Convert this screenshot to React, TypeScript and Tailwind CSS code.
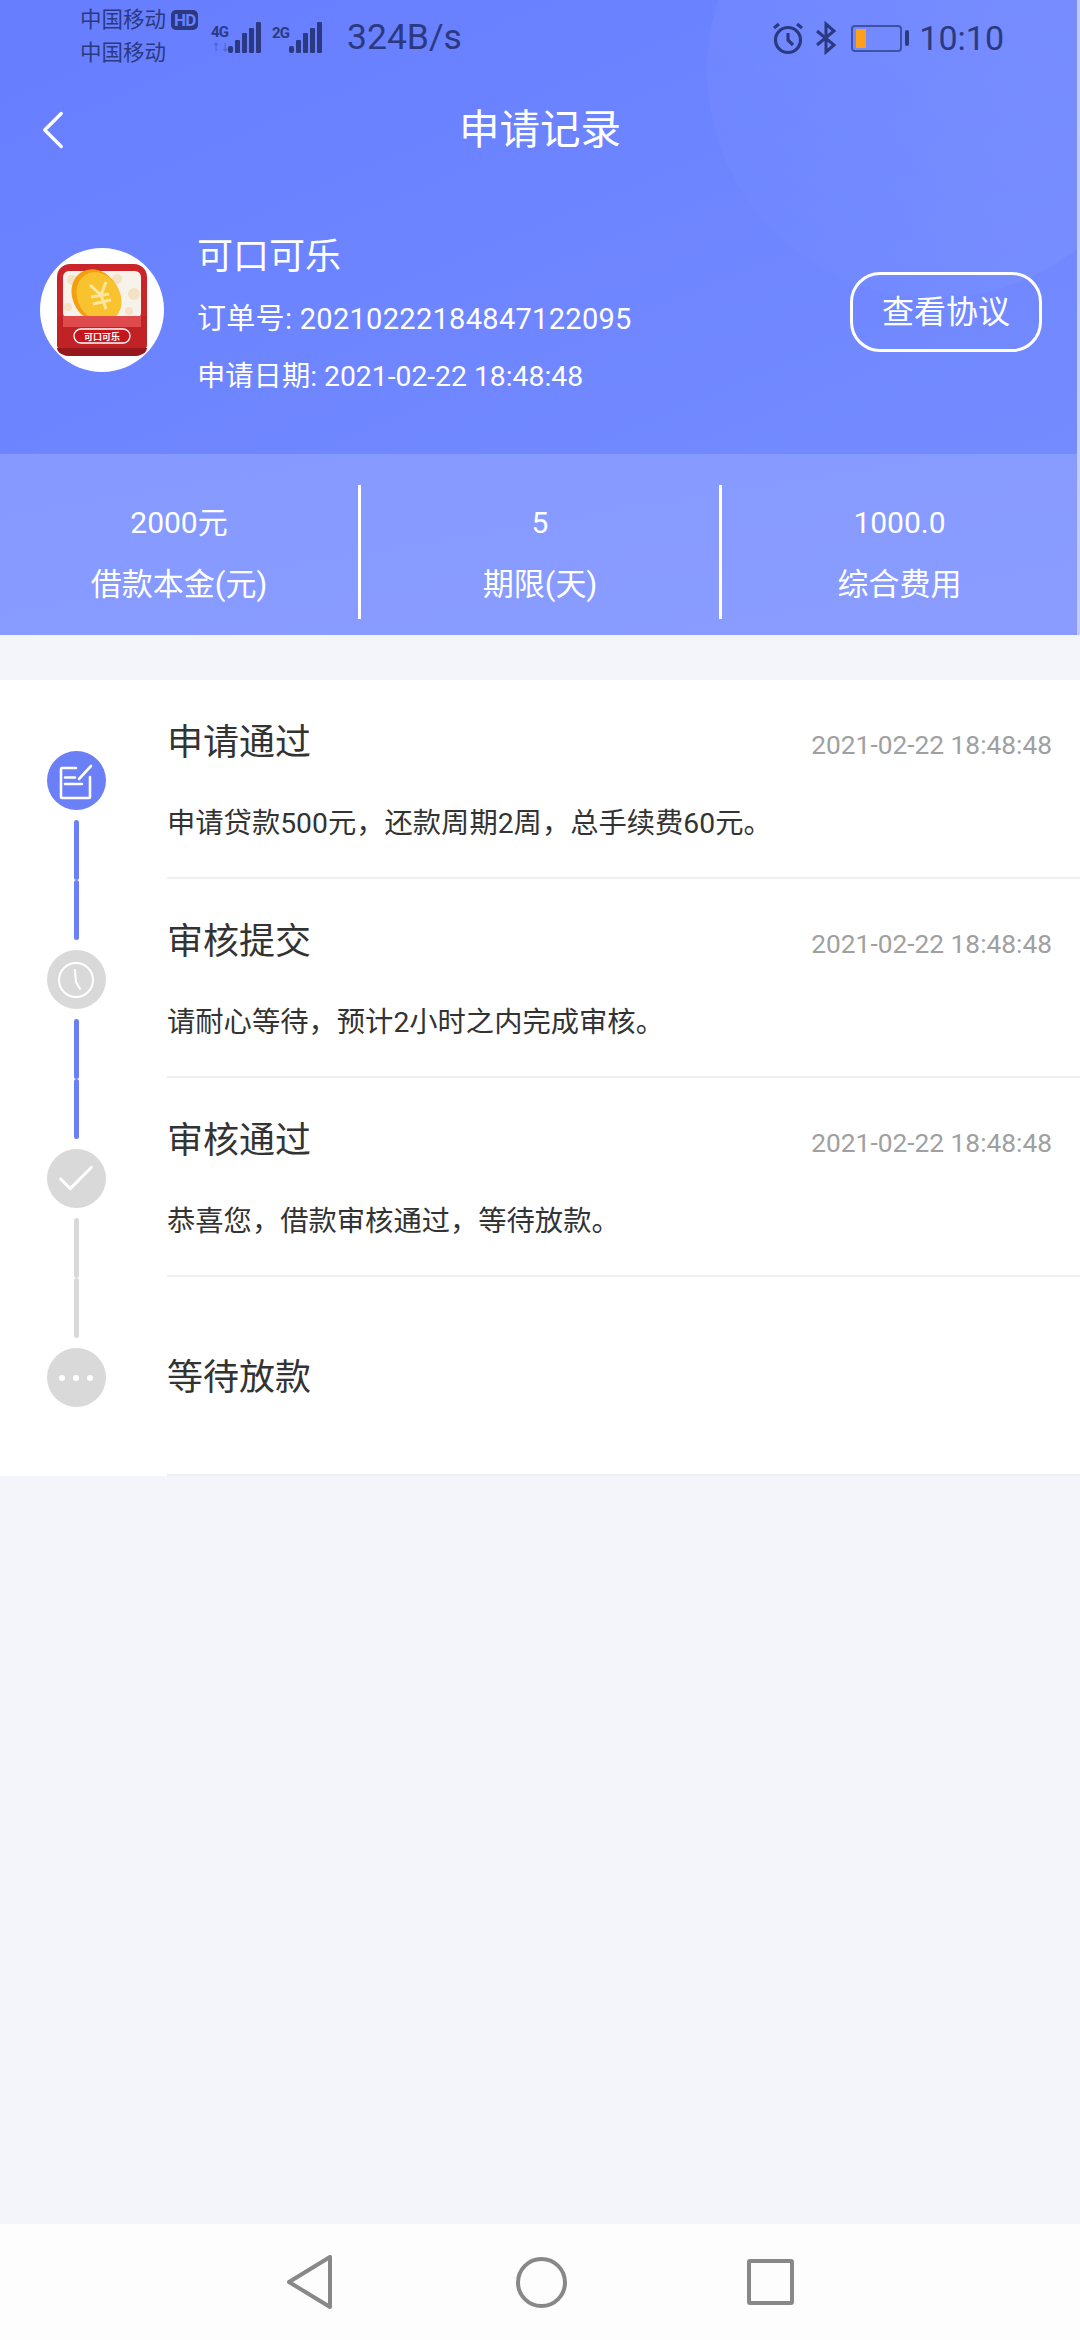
import { Check, ChevronLeft } from 'lucide-react';

const timeline = [
  { title: '申请通过', time: '2021-02-22 18:48:48', desc: '申请贷款500元，还款周期2周，总手续费60元。' },
  { title: '审核提交', time: '2021-02-22 18:48:48', desc: '请耐心等待，预计2小时之内完成审核。' },
  { title: '审核通过', time: '2021-02-22 18:48:48', desc: '恭喜您，借款审核通过，等待放款。' },
  { title: '等待放款', time: '', desc: '' },
];

const stats = [
  { value: '2000元', label: '借款本金(元)' },
  { value: '5', label: '期限(天)' },
  { value: '1000.0', label: '综合费用' },
];

function Bars() {
  return (
    <svg width="34" height="32" viewBox="0 0 34 32" fill="#2b3a80">
      <rect x="0" y="24" width="5" height="7" rx="2" />
      <rect x="7" y="18" width="5" height="13" rx="1" />
      <rect x="14" y="11" width="5" height="20" rx="1" />
      <rect x="21" y="6" width="5" height="25" rx="1" />
      <rect x="28" y="0" width="5" height="31" rx="1" />
    </svg>
  );
}

function StatusBar() {
  return (
    <div className="relative flex h-[76px] items-center pl-[80px] pr-[73px] text-[#2b3a80]">
      <div className="-mt-[3px] flex w-[131px] flex-col gap-[9px] text-[21.5px] leading-[24px]">
        <div className="flex items-center gap-[5px]">
          <span className="whitespace-nowrap">中国移动</span>
          <span className="rounded-[5px] bg-[#2b3a80] px-[3px] text-[17px] font-bold leading-[20px] tracking-tighter text-[#6a80ff]">HD</span>
        </div>
        <span>中国移动</span>
      </div>
      <div className="flex items-end">
        <div className="flex w-[17px] flex-col text-[15px] font-bold leading-[17px] tracking-tighter">
          4G
          <span className="text-[10px] leading-[13px] text-[#4f65d0]">↑↓</span>
        </div>
        <Bars />
        <div className="mb-[12px] ml-[10px] w-[17px] text-[15px] font-bold leading-[17px] tracking-tighter">2G</div>
        <Bars />
      </div>
      <span className="ml-[24px] text-[35.5px] leading-none">324B/s</span>
      <div className="ml-auto flex items-center">
        <svg width="34" height="34" viewBox="0 0 34 34" fill="none" stroke="#2b3a80" strokeWidth="3.2">
          <circle cx="17" cy="19" r="12.5" />
          <path d="M17 12v7l5 5M3 7l5-4M31 7l-5-4" />
        </svg>
        <svg className="ml-[10px]" width="22" height="34" viewBox="0 0 22 34" fill="none" stroke="#2b3a80" strokeWidth="3">
          <path d="M2 10l17 14-8 7V3l8 7L2 24" />
        </svg>
        <div className="ml-[14px] flex h-[27px] w-[51px] items-center rounded-[4px] border-2 border-[#3f51a5] pl-[3px]">
          <div className="h-[19px] w-[10px] bg-[#ff9f1c]" />
        </div>
        <div className="ml-[3px] h-[16px] w-[4px] rounded-full bg-[#2b3a80]" />
        <span className="ml-[10px] text-[34px] leading-none">10:10</span>
      </div>
    </div>
  );
}

function CoinLogo() {
  return (
    <svg width="90" height="92" viewBox="0 0 90 92">
      <rect width="90" height="92" rx="13" fill="#c9252a" />
      <rect x="6" y="7" width="78" height="48" rx="6" fill="#f7f2ea" />
      <circle cx="15" cy="16" r="5" fill="#f3e2c4" />
      <circle cx="60" cy="15" r="5" fill="#f3e2c4" />
      <circle cx="77" cy="30" r="6" fill="#f3e2c4" />
      <circle cx="72" cy="47" r="4" fill="#f3e2c4" />
      <circle cx="11" cy="43" r="4" fill="#f3e2c4" />
      <ellipse cx="39" cy="32" rx="23" ry="28" transform="rotate(-32 39 32)" fill="#f39f12" />
      <ellipse cx="42" cy="33" rx="21" ry="26" transform="rotate(-32 42 33)" fill="#f9c22f" />
      <path d="M33 21l11 10 5-13M44 31l5 14M34 33l18-3M36 40l18-4" fill="none" stroke="#fde7a0" strokeWidth="3" />
      <path d="M0 52h90v27a13 13 0 0 1-13 13H13A13 13 0 0 1 0 79z" fill="#c02226" />
      <rect x="6" y="52" width="78" height="11" fill="#df4a4c" />
      <path d="M0 84h90a13 8 0 0 1-13 8H13a13 8 0 0 1-13-8z" fill="#96181c" />
      <rect x="17" y="65" width="56" height="14" rx="7" fill="#c5161d" stroke="#fff" strokeWidth="1.3" />
      <text x="45" y="75.5" textAnchor="middle" fill="#fff" fontSize="9" fontWeight="700" fontFamily="'Noto Sans CJK SC', sans-serif">可口可乐</text>
    </svg>
  );
}

function Dot({ step }: { step: number }) {
  const bg = step === 0 ? 'bg-[#6b7ff7]' : 'bg-[#d9d9d9]';
  return (
    <div className={`flex h-[59px] w-[59px] shrink-0 items-center justify-center rounded-full ${bg}`}>
      {step === 0 && (
        <svg width="59" height="59" viewBox="0 0 59 59" fill="none" stroke="#fff" strokeWidth="2.6" strokeLinecap="round">
          <path d="M29 17H15a1 1 0 0 0-1 1v28a1 1 0 0 0 1 1h27a1 1 0 0 0 1-1V26" />
          <path d="M32 28L44 15M18 26.5h10M18 33h17" />
        </svg>
      )}
      {step === 1 && (
        <svg width="38" height="38" viewBox="0 0 38 38" fill="none" stroke="#fff" strokeWidth="2" strokeLinecap="round">
          <circle cx="19" cy="19" r="17" />
          <path d="M18 9l1 12 4 7" />
        </svg>
      )}
      {step === 2 && <Check className="h-[46px] w-[46px] text-white" strokeWidth={1.6} />}
      {step === 3 && (
        <div className="flex gap-[8px]">
          <span className="h-[6px] w-[6px] rounded-full bg-white" />
          <span className="h-[6px] w-[6px] rounded-full bg-white" />
          <span className="h-[6px] w-[6px] rounded-full bg-white" />
        </div>
      )}
    </div>
  );
}

function Connector({ color }: { color: string }) {
  return (
    <div className="flex flex-col">
      <div className={`h-[60px] w-[5px] rounded-full ${color}`} />
      <div className={`h-[60px] w-[5px] rounded-full ${color}`} />
    </div>
  );
}

export default function App() {
  return (
    <div className="flex min-h-[2340px] flex-col bg-[#f3f5fa] font-['Roboto','Noto_Sans_CJK_SC',sans-serif]">
      <div className="relative h-[454px] overflow-hidden border-r-[3px] border-[#c3ccf5] bg-gradient-to-br from-[#667eff] to-[#748bff] text-white">
        <div className="absolute left-[707px] top-[-158px] h-[456px] w-[456px] rounded-full bg-gradient-to-tr from-white/0 to-white/10" />
        <StatusBar />
        <div className="relative flex h-[108px] items-center justify-center pl-[3px]">
          <ChevronLeft className="absolute left-[20px] h-[66px] w-[66px]" strokeWidth={1.2} />
          <h1 className="text-[40.5px] leading-none">申请记录</h1>
        </div>
        <div className="relative flex items-start pl-[40px] pr-[35px] pt-[48px]">
          <div className="mt-[16px] flex h-[124px] w-[124px] shrink-0 items-center justify-center rounded-full bg-white">
            <CoinLogo />
          </div>
          <div className="ml-[33px] flex flex-col">
            <span className="text-[36px] leading-[50px]">可口可乐</span>
            <span className="mt-[14px] whitespace-nowrap text-[29px] leading-[46px] tracking-[0.3px]">订单号: 20210222184847122095</span>
            <span className="mt-[12px] whitespace-nowrap text-[28.3px] leading-[46px]">申请日期: 2021-02-22 18:48:48</span>
          </div>
          <button className="ml-auto mt-[40px] flex h-[80px] w-[192px] items-center justify-center rounded-[30px] border-[3px] border-white text-[32px]">
            查看协议
          </button>
        </div>
      </div>

      <div className="flex h-[181px] items-start border-r-[3px] border-[#c3ccf5] bg-gradient-to-br from-[#8599ff] to-[#8a9cff] pt-[31px]">
        {stats.map((s, i) => (
          <div
            key={s.label}
            className={`flex h-[134px] flex-col items-center gap-[22px] pt-[18px] text-white ${i < 2 ? 'w-[361px] border-r-[3px] border-white' : 'flex-1'}`}
          >
            <span className="text-[30px] leading-[40px]">{s.value}</span>
            <span className="text-[31px] leading-[40px]">{s.label}</span>
          </div>
        ))}
      </div>

      <div className="mt-[45px] flex bg-white">
        <div className="flex w-[152px] shrink-0 flex-col items-center gap-[10px] pt-[71px]">
          <Dot step={0} />
          <Connector color="bg-[#6b7ff7]" />
          <Dot step={1} />
          <Connector color="bg-[#6b7ff7]" />
          <Dot step={2} />
          <Connector color="bg-[#d9d9d9]" />
          <Dot step={3} />
        </div>
        <div className="ml-[15px] flex-1">
          {timeline.map((t) => (
            <div key={t.title} className={`h-[199px] border-b-2 border-[#efefef] ${t.desc ? 'pt-[38px]' : 'pt-[76px]'}`}>
              <div className="flex items-center justify-between pr-[28px]">
                <span className="text-[36px] leading-[50px] text-[#333]">{t.title}</span>
                <span className="pt-[6px] text-[26.3px] text-[#a0a0a0]">{t.time}</span>
              </div>
              {t.desc && <p className="mt-[36px] text-[28.3px] leading-[40px] text-[#333]">{t.desc}</p>}
            </div>
          ))}
        </div>
      </div>

      <div className="mt-auto flex h-[116px] items-center justify-center bg-[#fdfdfd]">
        <div className="flex items-center">
          <svg width="48" height="54" viewBox="0 0 48 54" fill="none" stroke="#888" strokeWidth="4" strokeLinejoin="round">
            <path d="M44 2v50L3 27z" />
          </svg>
          <div className="ml-[182px] h-[51px] w-[51px] rounded-full border-4 border-[#888]" />
          <div className="ml-[180px] h-[46px] w-[47px] rounded-[3px] border-4 border-[#888]" />
        </div>
      </div>
    </div>
  );
}
